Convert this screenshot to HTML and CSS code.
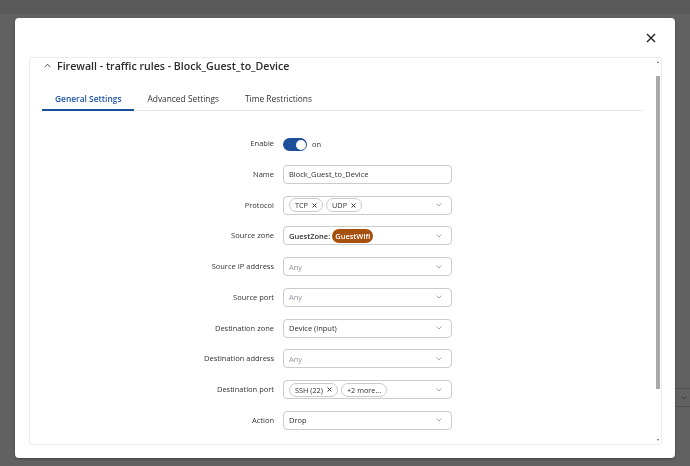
FILE: index.html
```html
<!DOCTYPE html>
<html>
<head>
<meta charset="utf-8">
<link rel="stylesheet" href="styles.css">
</head>
<body>
<div class="page">
  <div class="page-header"></div>
  <div class="page-select"><svg class="chev" viewBox="0 0 6 4" width="6" height="4"><path d="M0.5 0.5 L3 3 L5.5 0.5" fill="none" stroke="#999" stroke-width="0.9"/></svg></div>
</div>
<div class="overlay">
  <div class="modal">
    <div class="modal-head">
      <svg class="close" viewBox="0 0 10 10" width="10" height="10"><path d="M1 1 L9 9 M9 1 L1 9" stroke="#222" stroke-width="1.4" fill="none"/></svg>
    </div>
    <div class="card">
      <div class="card-title">
        <svg class="caret" viewBox="0 0 7 5" width="7" height="5"><path d="M0.7 4.2 L3.5 1.2 L6.3 4.2" fill="none" stroke="#555" stroke-width="1"/></svg>
        <span>Firewall - traffic rules - Block_Guest_to_Device</span>
      </div>
      <div class="tabs">
        <div class="tab active">General Settings</div>
        <div class="tab">Advanced Settings</div>
        <div class="tab">Time Restrictions</div>
      </div>
      <div class="form">
        <div class="label">Enable</div>
        <div class="control-plain"><span class="toggle"><span class="knob"></span></span><span class="on">on</span></div>

        <div class="label">Name</div>
        <div class="input"><span class="val">Block_Guest_to_Device</span></div>

        <div class="label">Protocol</div>
        <div class="input select">
          <span class="chips">
            <span class="chip">TCP <svg class="x" viewBox="0 0 6 6" width="5" height="5"><path d="M0.7 0.7 L5.3 5.3 M5.3 0.7 L0.7 5.3" stroke="#333" stroke-width="1.2"/></svg></span>
            <span class="chip">UDP <svg class="x" viewBox="0 0 6 6" width="5" height="5"><path d="M0.7 0.7 L5.3 5.3 M5.3 0.7 L0.7 5.3" stroke="#333" stroke-width="1.2"/></svg></span>
          </span>
          <svg class="chev" viewBox="0 0 6 4" width="6" height="4"><path d="M0.5 0.5 L3 3 L5.5 0.5" fill="none" stroke="#a0a0a0" stroke-width="0.9"/></svg>
        </div>

        <div class="label">Source zone</div>
        <div class="input select">
          <span class="zone"><span class="zone-name">GuestZone:</span><span class="badge">GuestWifi</span></span>
          <svg class="chev" viewBox="0 0 6 4" width="6" height="4"><path d="M0.5 0.5 L3 3 L5.5 0.5" fill="none" stroke="#a0a0a0" stroke-width="0.9"/></svg>
        </div>

        <div class="label">Source IP address</div>
        <div class="input select">
          <span class="ph">Any</span>
          <svg class="chev" viewBox="0 0 6 4" width="6" height="4"><path d="M0.5 0.5 L3 3 L5.5 0.5" fill="none" stroke="#a0a0a0" stroke-width="0.9"/></svg>
        </div>

        <div class="label">Source port</div>
        <div class="input select">
          <span class="ph">Any</span>
          <svg class="chev" viewBox="0 0 6 4" width="6" height="4"><path d="M0.5 0.5 L3 3 L5.5 0.5" fill="none" stroke="#a0a0a0" stroke-width="0.9"/></svg>
        </div>

        <div class="label">Destination zone</div>
        <div class="input select">
          <span class="val">Device (input)</span>
          <svg class="chev" viewBox="0 0 6 4" width="6" height="4"><path d="M0.5 0.5 L3 3 L5.5 0.5" fill="none" stroke="#a0a0a0" stroke-width="0.9"/></svg>
        </div>

        <div class="label">Destination address</div>
        <div class="input select">
          <span class="ph">Any</span>
          <svg class="chev" viewBox="0 0 6 4" width="6" height="4"><path d="M0.5 0.5 L3 3 L5.5 0.5" fill="none" stroke="#a0a0a0" stroke-width="0.9"/></svg>
        </div>

        <div class="label">Destination port</div>
        <div class="input select">
          <span class="chips">
            <span class="chip">SSH (22) <svg class="x" viewBox="0 0 6 6" width="5" height="5"><path d="M0.7 0.7 L5.3 5.3 M5.3 0.7 L0.7 5.3" stroke="#333" stroke-width="1.2"/></svg></span>
            <span class="chip">+2 more...</span>
          </span>
          <svg class="chev" viewBox="0 0 6 4" width="6" height="4"><path d="M0.5 0.5 L3 3 L5.5 0.5" fill="none" stroke="#a0a0a0" stroke-width="0.9"/></svg>
        </div>

        <div class="label">Action</div>
        <div class="input select">
          <span class="val">Drop</span>
          <svg class="chev" viewBox="0 0 6 4" width="6" height="4"><path d="M0.5 0.5 L3 3 L5.5 0.5" fill="none" stroke="#a0a0a0" stroke-width="0.9"/></svg>
        </div>
      </div>
      <div class="scrollbar">
        <span class="arrow-up"></span>
        <span class="thumb"></span>
        <span class="arrow-down"></span>
      </div>
    </div>
  </div>
</div>
</body>
</html>
```

FILE: styles.css
```css
* { box-sizing: border-box; }
html, body { margin: 0; padding: 0; }
body {
  width: 690px;
  height: 466px;
  overflow: hidden;
  background: #ffffff;
  font-family: "Open Sans", "Noto Sans", sans-serif;
  color: #333;
}
.page-header {
  height: 15px;
  background: #ececec;
  border-bottom: 1px solid #ffffff;
}
.page-select {
  margin: 373px 0 0 500px;
  width: 200px;
  height: 19px;
  border: 1px solid #d4d4d4;
  display: flex;
  align-items: center;
  justify-content: flex-end;
  padding-right: 12px;
}
.overlay {
  position: fixed;
  inset: 0;
  background: rgba(0, 0, 0, 0.62);
}
.modal {
  position: absolute;
  left: 15px;
  top: 18px;
  width: 660px;
  height: 440px;
  background: #fff;
  border-radius: 4px;
  box-shadow: 0 1px 3px rgba(0, 0, 0, 0.35);
  padding: 0 13px 13px 14px;
  display: flex;
  flex-direction: column;
}
.modal-head {
  height: 39px;
  display: flex;
  align-items: center;
  justify-content: flex-end;
  padding-right: 6px;
}
.close { display: block; }
.card {
  position: relative;
  flex: 1;
  border: 1px solid #ececec;
  border-radius: 3px;
  overflow: hidden;
}
.card-title {
  height: 16px;
  display: flex;
  align-items: center;
  gap: 6px;
  padding-left: 14px;
  font-size: 10.6px;
  font-weight: 600;
  color: #2a2a2a;
  white-space: nowrap;
}
.caret { display: block; margin-top: -1px; }
.tabs {
  display: flex;
  margin: 14px 18px 0 12px;
  border-bottom: 1px solid #e8e8e8;
}
.tab {
  padding: 1px 13px 0;
  line-height: 20px;
  font-size: 8.4px;
  color: #333;
  border-bottom: 2px solid transparent;
  margin-bottom: -1px;
  white-space: nowrap;
}
.tab.active {
  color: #1d56a6;
  font-weight: 600;
  border-bottom-color: #1a4f9e;
}
.form {
  display: grid;
  grid-template-columns: 244px 169px;
  column-gap: 9px;
  row-gap: 11.75px;
  margin-top: 23px;
  font-size: 7.5px;
}
.label {
  height: 19px;
  line-height: 19px;
  text-align: right;
  color: #333;
  white-space: nowrap;
}
.control-plain {
  height: 19px;
  display: flex;
  align-items: center;
  gap: 5px;
}
.toggle {
  width: 24px;
  height: 13px;
  border-radius: 7px;
  background: #1e4f9b;
  display: flex;
  align-items: center;
  justify-content: flex-end;
  padding-right: 1.5px;
  margin-top: 2px;
}
.knob {
  width: 10px;
  height: 10px;
  border-radius: 50%;
  background: #fff;
}
.on { color: #333; }
.input {
  height: 19px;
  border: 1px solid #cbcbcb;
  border-radius: 4px;
  padding: 0 9px 0 5px;
  display: flex;
  align-items: center;
  justify-content: space-between;
  white-space: nowrap;
}
.val { color: #2e2e2e; }
.ph { color: #8f97a4; }
.chev { display: block; flex: none; }
.chips { display: flex; gap: 3px; }
.chip {
  height: 14px;
  border: 1px solid #cacaca;
  border-radius: 7px;
  padding: 0 5px;
  display: flex;
  align-items: center;
  gap: 4px;
  color: #2e2e2e;
  font-size: 7.3px;
}
.x { display: block; }
.zone { display: flex; align-items: center; gap: 2px; }
.zone-name { font-weight: 600; color: #333; }
.badge {
  background: #a74f0d;
  color: #fff;
  font-weight: 600;
  border-radius: 7px;
  height: 14px;
  line-height: 14px;
  padding: 0 3px;
}
.scrollbar {
  position: absolute;
  top: 0;
  right: 0;
  bottom: 0;
  width: 6px;
  display: flex;
  flex-direction: column;
  align-items: center;
  padding: 3px 0;
}
.arrow-up, .arrow-down {
  width: 0;
  height: 0;
  border-left: 1.5px solid transparent;
  border-right: 1.5px solid transparent;
}
.arrow-up { border-bottom: 2px solid #666; }
.arrow-down { border-top: 2px solid #666; margin-top: auto; }
.thumb {
  width: 4px;
  height: 313px;
  margin-top: 13px;
  background: #a9a9a9;
}
```
